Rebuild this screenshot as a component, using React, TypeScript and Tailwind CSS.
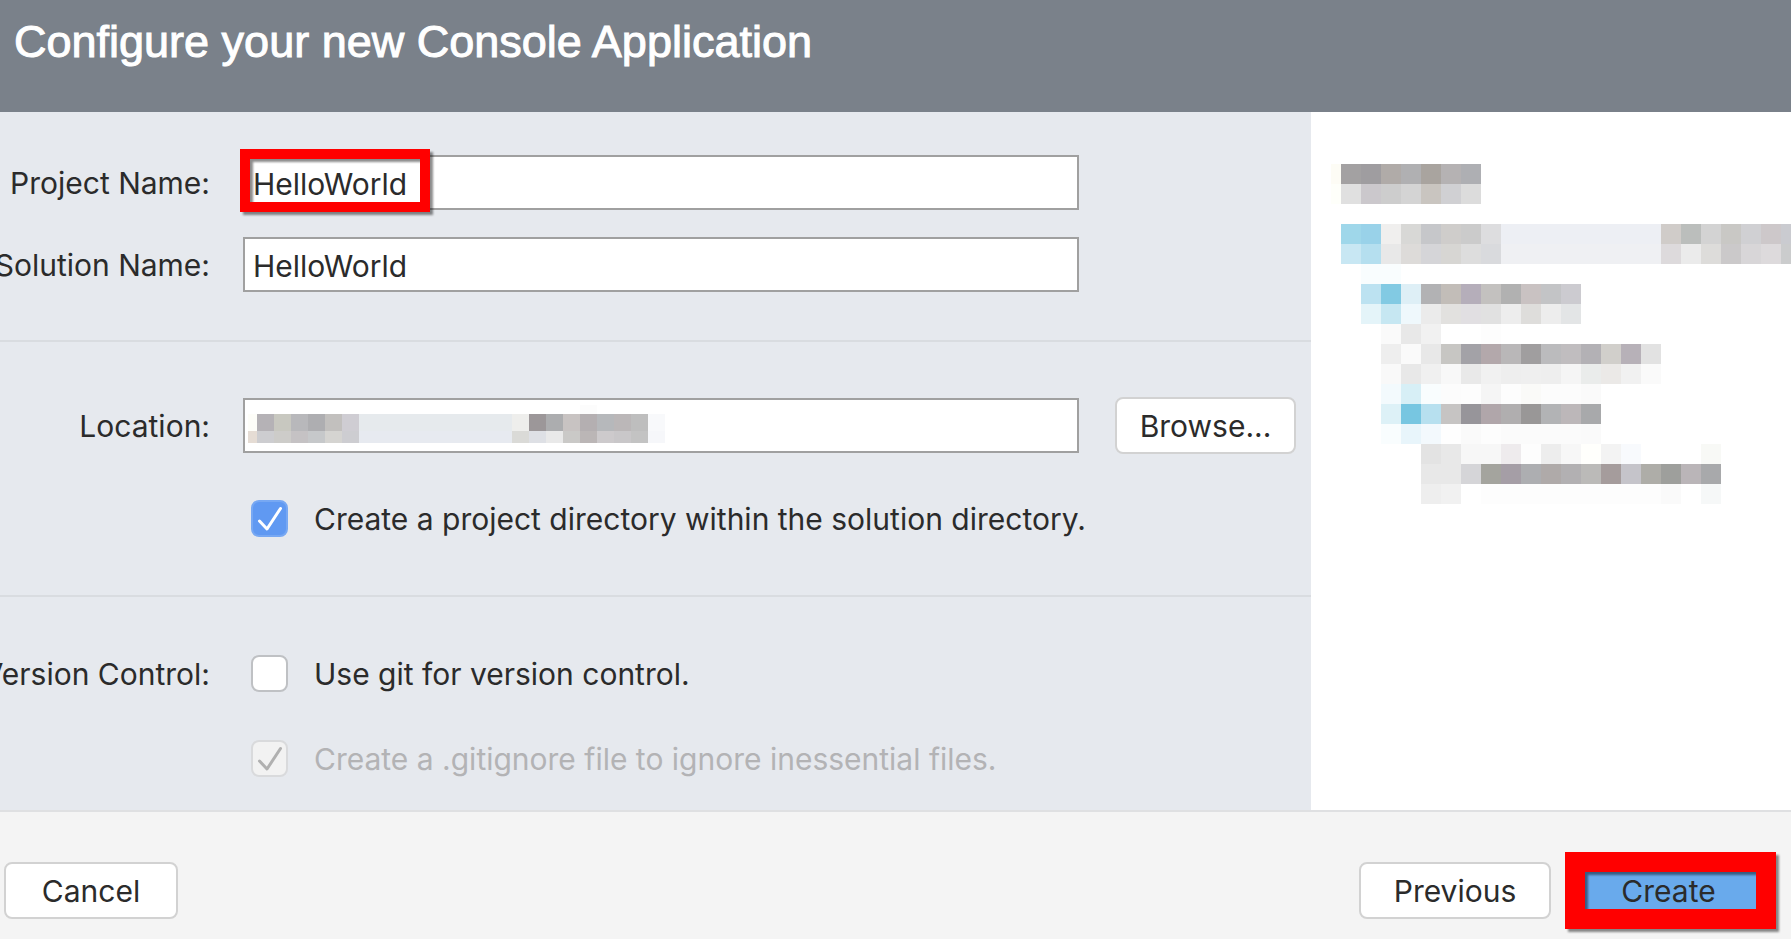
import type { InputHTMLAttributes, ReactNode } from 'react';

type MosaicRow = { y: number; height?: number; start: number; cells: string };

interface MosaicProps {
  rows: MosaicRow[];
  size: number;
  width: number;
  height: number;
  className?: string;
}

// Pixelated block that hides private text. Cells are hex colours, "colour*n" repeats one.
function Mosaic({ rows, size, width, height, className }: MosaicProps) {
  return (
    <svg
      width={width}
      height={height}
      viewBox={`0 0 ${width} ${height}`}
      shapeRendering="crispEdges"
      aria-hidden="true"
      className={className}
    >
      {rows.map((row) => {
        const colors = row.cells.split(' ').flatMap((cell) => {
          const [color, count] = cell.split('*');
          return Array<string>(Number(count ?? 1)).fill(color);
        });
        return colors.map((color, i) => (
          <rect
            key={`${row.y}-${row.start}-${i}`}
            x={row.start + i * size}
            y={row.y}
            width={size}
            height={row.height ?? size}
            fill={`#${color}`}
          />
        ));
      })}
    </svg>
  );
}

const previewRows: MosaicRow[] = [
  { y: 0, start: -10, cells: 'fdfcf5 a3a1a2' },
  { y: 20, start: -10, cells: 'fefffa e0e0e0' },
  { y: 0, start: 10, cells: 'a3a1a2 9f9da0 b0aba8 b0b0b2 a9a49f b5b2b3 aeafb3' },
  { y: 20, start: 10, cells: 'e0e0e0 cbc8cc cdcdcd d4d4d4 c9c5c0 d0d0d3 dcdcdc' },
  { y: 60, start: 10, cells: '9fd7ea 99d2e9 f0efee d8d8d6 c6c7ca cfcdcb cbcbcb dddddf edeff4*8 d0ccc9 bbbebc d3d3d3 c9c8c5 d0d0d3 cdc8ca cacbd0' },
  { y: 80, start: 10, cells: 'c8e7f3 b5dfef e8e8e8 dddbd9 d5d5d8 d7d6d3 dddddd d9dadd eff0f3*8 dddadc ebebeb dddcda cbc9ca d8d6d8 dddadc cbcccd' },
  { y: 100, start: 30, cells: 'f9fdfe*2' },
  { y: 120, start: 30, cells: 'bce2f1 82cae3 deeff6 b2b2b4 c2bdb8 b5aeba c3c1bf b1b1b1 c9c2c2 c3c4c6 cccbd0' },
  { y: 140, start: 30, cells: 'e4f4f9 c6e7f2 eff8fc ebebeb e2e1df e1dfe2 e1e1e1 ededed dedddb ededed e3e5e6' },
  { y: 160, start: 50, cells: 'fafafa e8e8e8 f1f1f1 ffffff*2 fdfdfd' },
  { y: 180, start: 50, cells: 'eeeeee fafafa e8e8e8 c7c6c3 a3a2a7 b3a8ab b9b7b8 a09e9f bbbbbd c0bdbf b3b1b5 d1cfcb b7b1b8 e2e2e2' },
  { y: 200, start: 50, cells: 'f9f9f9 e8e8e8 f0f0f0 f8f8f8 e9e9e9 f1f1f1 eeeeee efefef eeeeee f5f5f5 eaeceb ebe9e7 f1f1f1 fafafa' },
  { y: 220, start: 50, cells: 'f3fafd d7eff6 f9fdfe fcfcfc fdfdfd f5f5f5 fdfdfd fafaf8 fcfcfc*2 fafafa' },
  { y: 240, start: 50, cells: 'ddf1f7 77c6e1 b7e0ef c6c4c3 97959a b0a6aa b0aeaf 999797 b2b3b5 bcb7b9 a8a9ab' },
  { y: 260, start: 50, cells: 'f9fdfe e8f5fb f3f9fd fefefe fafafa fdfdfd fbfbfb*4 fafafa' },
  { y: 280, start: 90, cells: 'e3e3e3 e8e8e8 f7f7f7*2 eeebed fdfdfd ededed f7f7f7 fffffc f3f3f3 f8fafd ffffff*3 f8f9f6' },
  { y: 300, start: 90, cells: 'e8e8e8*2 d5d5d8 a4a49e a59ea6 adaeb1 afaaa9 b2b0b2 bbbab8 a59c9c c5c4ca aeada8 9e9f9c bab5b8 a8a9ab' },
  { y: 320, start: 90, cells: 'eeeeee f1f1f1 ffffff fdfdfd*9 fafafa ffffff f6f8f8' },
];

const locationRows: MosaicRow[] = [
  { y: 0, height: 9, start: 332, cells: 'fcfcfc' },
  { y: 9, start: -8, cells: 'fdfdf8 b5b2b6 c8c8c0 b8b8bb aeaeb1 c2c0be cfcdd3 e6eaed*9 eeeeec 9c9799 acadaf c8c3c2 b4afb1 b6b8bb bbb7b8 bebebe f8f9fb' },
  { y: 26, height: 12, start: -8, cells: 'e5dcd4 cdcdd0 cdccc9 c5c2c4 c6c8ca d5d4d1 cdcdd1 e7eaf0*9 dadad7 dee0e5 e9e9e9 cac9c7 bbb6b6 cdcacc c9c7c9 c3c3c3 f6f7fa' },
];

const FIELD = 'h-[55px] w-full border-2 border-[#a0a0a0] bg-white px-2 pt-0.5 text-[30px] leading-9 outline-none';
const BUTTON = 'h-[57px] rounded-lg border-2 border-[#d2d2d2] bg-white text-center text-[30px] leading-9';

function FieldLabel({ htmlFor, children }: { htmlFor?: string; children: ReactNode }) {
  return (
    <div className="flex w-[210px] shrink-0 justify-end whitespace-nowrap">
      {htmlFor ? <label htmlFor={htmlFor}>{children}</label> : <span>{children}</span>}
    </div>
  );
}

interface CheckProps extends InputHTMLAttributes<HTMLInputElement> {
  id: string;
  label: string;
}

function Check({ id, label, ...rest }: CheckProps) {
  return (
    <div className="flex h-[37px] items-center gap-[26px]">
      <span className="relative h-[37px] w-[37px]">
        <input
          id={id}
          type="checkbox"
          className="peer block h-[37px] w-[37px] appearance-none rounded-lg border-2 border-[#bfc1c4] bg-white checked:border-[#77a8f3] checked:bg-[#6099f2] disabled:border-[#d9dadc] disabled:bg-[#f2f2f2]"
          {...rest}
        />
        <svg
          viewBox="0 0 37 37"
          fill="none"
          stroke="currentColor"
          strokeWidth="3"
          strokeLinecap="round"
          strokeLinejoin="round"
          className="pointer-events-none absolute inset-0 hidden text-white peer-checked:block peer-disabled:text-[#b0b0b0]"
        >
          <path d="M8.5 21 L16 29 L29.5 8.5" />
        </svg>
      </span>
      <label htmlFor={id} className={rest.disabled ? 'text-[#b3b3b5]' : ''}>
        {label}
      </label>
    </div>
  );
}

export default function App() {
  return (
    <div className="flex min-h-screen flex-col overflow-hidden bg-[#f4f4f4] font-['Inter','Liberation_Sans',sans-serif] text-[30px] leading-9 text-[#2b2b2b]">
      <header className="h-[112px] bg-[#7a818a] px-3.5 pt-4">
        <h1 className="font-['Liberation_Sans',sans-serif] text-[45px] leading-[52px] text-white [-webkit-text-stroke:1px_white]">
          Configure your new Console Application
        </h1>
      </header>

      <main className="flex flex-1">
        <form className="flex min-w-0 flex-1 flex-col bg-[#e6e9ee]">
          {/* Names */}
          <section className="flex flex-col gap-[27px] border-b-2 border-[#d9dce0] pt-[43px] pb-12">
            <div className="flex items-center gap-[33px] pr-[232px]">
              <FieldLabel htmlFor="project">Project Name:</FieldLabel>
              <div className="relative flex-1">
                <input id="project" defaultValue="HelloWorld" className={FIELD} />
                <span className="pointer-events-none absolute -top-1.5 -left-[3px] h-[63px] w-[190px] border-10 border-[#ff0000] drop-shadow-[3px_3px_1px_rgba(0,0,0,0.45)]" />
              </div>
            </div>
            <div className="flex items-center gap-[33px] pr-[232px]">
              <FieldLabel htmlFor="solution">Solution Name:</FieldLabel>
              <div className="flex-1">
                <input id="solution" defaultValue="HelloWorld" className={FIELD} />
              </div>
            </div>
          </section>

          {/* Location */}
          <section className="flex flex-col gap-[46px] border-b-2 border-[#d9dce0] pt-[55px] pb-[58px]">
            <div className="flex items-center gap-9 pr-[15px]">
              <div className="flex flex-1 items-center gap-[33px]">
                <FieldLabel htmlFor="location">Location:</FieldLabel>
                <div className="relative flex-1">
                  <input id="location" className={FIELD} />
                  <Mosaic
                    rows={locationRows}
                    size={17}
                    width={417}
                    height={38}
                    className="pointer-events-none absolute top-[7px] left-[5px]"
                  />
                </div>
              </div>
              <button type="button" className={`${BUTTON} w-[181px]`}>
                Browse...
              </button>
            </div>
            <div className="pl-[251px]">
              <Check id="directory" label="Create a project directory within the solution directory." defaultChecked />
            </div>
          </section>

          {/* Version control */}
          <section className="flex flex-col gap-12 pt-[58px] pb-8">
            <div className="flex items-center gap-[41px]">
              <FieldLabel>Version Control:</FieldLabel>
              <Check id="git" label="Use git for version control." />
            </div>
            <div className="pl-[251px]">
              <Check id="gitignore" label="Create a .gitignore file to ignore inessential files." defaultChecked disabled />
            </div>
          </section>
        </form>

        <aside className="w-[480px] shrink-0 overflow-hidden bg-white pt-[52px] pl-5">
          <Mosaic rows={previewRows} size={20} width={460} height={340} />
        </aside>
      </main>

      <footer className="flex items-center justify-between border-t-2 border-[#dfe0e2] pt-[50px] pr-[25px] pb-5 pl-1">
        <button type="button" className={`${BUTTON} w-[174px]`}>
          Cancel
        </button>
        <div className="flex gap-6">
          <button type="button" className={`${BUTTON} w-48`}>
            Previous
          </button>
          <button
            type="submit"
            className="relative h-[57px] w-[191px] rounded-lg bg-[#69aaec] pr-1 text-center"
          >
            Create
            <span className="pointer-events-none absolute -inset-2.5 border-20 border-[#ff0000] drop-shadow-[3px_3px_1px_rgba(0,0,0,0.45)]" />
          </button>
        </div>
      </footer>
    </div>
  );
}
